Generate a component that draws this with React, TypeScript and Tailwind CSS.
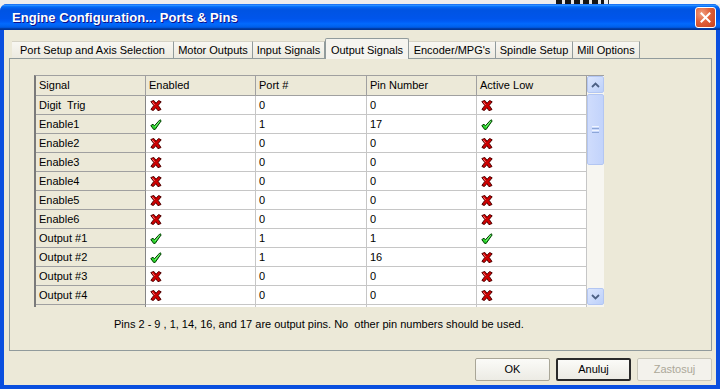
import React from "react";

function XIcon() {
  return (
    <svg width="12" height="11" viewBox="0 0 12 11">
      <path
        d="M0.8 1.6 L3.8 0.4 L6 3.3 L8.6 0.5 L11.2 1.8 L8.2 5.4 L11 9.5 L8 10.7 L5.8 7.7 L3.3 10.6 L0.9 9.4 L3.8 5.4 Z"
        fill="#CF0000"
        stroke="#500000"
        strokeWidth="1"
        strokeLinejoin="round"
      />
      <path d="M2.2 1.8 L4.6 4.9" stroke="#FF6E6E" strokeWidth="1" />
    </svg>
  );
}

function CheckIcon() {
  return (
    <svg width="12" height="11" viewBox="0 0 12 11">
      <path
        d="M0.8 6.6 L3 5.2 L4.4 6.8 L10 0.7 L11.2 1.8 L5.2 10.4 L3.6 10.4 Z"
        fill="#2CD42C"
        stroke="#003E00"
        strokeWidth="1"
        strokeLinejoin="round"
      />
      <path d="M5 8 L9.6 2.2" stroke="#9CFF9C" strokeWidth="0.8" />
    </svg>
  );
}

type Row = [string, boolean, string, string, boolean];

const rows: Row[] = [
  ["Digit  Trig", false, "0", "0", false],
  ["Enable1", true, "1", "17", true],
  ["Enable2", false, "0", "0", false],
  ["Enable3", false, "0", "0", false],
  ["Enable4", false, "0", "0", false],
  ["Enable5", false, "0", "0", false],
  ["Enable6", false, "0", "0", false],
  ["Output #1", true, "1", "1", true],
  ["Output #2", true, "1", "16", false],
  ["Output #3", false, "0", "0", false],
  ["Output #4", false, "0", "0", false],
];

const tabs: { label: string; w: string; sel?: boolean }[] = [
  { label: "Port Setup and Axis Selection", w: "w-[162px]" },
  { label: "Motor Outputs", w: "w-[79px]" },
  { label: "Input Signals", w: "w-[72px]" },
  { label: "Output Signals", w: "w-[84px]", sel: true },
  { label: "Encoder/MPG's", w: "w-[87px]" },
  { label: "Spindle Setup", w: "w-[77px]" },
  { label: "Mill Options", w: "w-[67px]" },
];

function ScrollBtn({ up }: { up: boolean }) {
  return (
    <div className="h-[17px] w-[17px] rounded-[2px] border border-[#B3C6F2] bg-[linear-gradient(135deg,#DCE6FD,#BCD0FA)] flex items-center justify-center">
      <svg width="9" height="6" viewBox="0 0 9 6">
        <path
          d={up ? "M1 5 L4.5 1.5 L8 5" : "M1 1 L4.5 4.5 L8 1"}
          fill="none"
          stroke="#4D6185"
          strokeWidth="1.8"
        />
      </svg>
    </div>
  );
}

export default function App() {
  return (
    <div className="w-[720px] h-[389px] flex flex-col overflow-hidden bg-[#ebebeb] font-['Liberation_Sans',Arial,sans-serif] text-[11px] text-black">
      {/* desktop strip */}
      <div className="h-[4px] flex shrink-0">
        <div className="w-[556px] bg-[#ececec]" />
        <div className="w-[48px] bg-[repeating-linear-gradient(90deg,#151515_0px,#151515_6px,#e6e6e6_6px,#e6e6e6_9px)]" />
        <div className="w-[4px] bg-[#eeeeee]" />
        <div className="w-[1px] bg-[#333333]" />
        <div className="flex-1 bg-[#f8f8f8]" />
      </div>

      {/* window */}
      <div className="flex-1 flex flex-col rounded-t-[7px] overflow-hidden bg-[#0A4FDF]">
        {/* title bar */}
        <div className="h-[26px] shrink-0 flex items-center justify-between pl-[12px] pr-[4px] bg-[linear-gradient(to_bottom,#0058ee_0%,#3593ff_4%,#288eff_6%,#127dff_8%,#036ffc_10%,#0262ee_14%,#0057e5_20%,#0054e3_24%,#0055eb_56%,#005bf5_66%,#026afe_76%,#0062ef_86%,#0052d6_92%,#0040ab_94%,#003092_100%)]">
          <span className="text-white font-bold text-[13px] tracking-[0.05px] [text-shadow:1px_1px_#0F1089] pt-[1px]">
            Engine Configuration... Ports &amp; Pins
          </span>
          <div className="w-[21px] h-[21px] rounded-[3px] border border-white bg-[radial-gradient(circle_at_30%_30%,#F0A080_0%,#E0603A_45%,#C8401C_100%)] flex items-center justify-center">
            <svg width="11" height="11" viewBox="0 0 11 11">
              <path d="M1.5 1.5 L9.5 9.5 M9.5 1.5 L1.5 9.5" stroke="white" strokeWidth="2" strokeLinecap="square" />
            </svg>
          </div>
        </div>

        {/* body */}
        <div className="flex-1 flex flex-col mx-[4px] mb-[4px] bg-[#ECE9D8]">
          {/* tabs */}
          <div className="mt-[8px] h-[20px] flex items-end pl-[8px] relative z-10">
            {tabs.map((t) =>
              t.sel ? (
                <div
                  key={t.label}
                  className={`${t.w} h-[21px] -mb-[1px] flex items-start justify-center pt-[3px] bg-[#F5F4EF] border-t border-l border-r border-[#919B9C] rounded-t-[2px]`}
                >
                  {t.label}
                </div>
              ) : (
                <div
                  key={t.label}
                  className={`${t.w} h-[17px] flex items-center justify-center bg-[linear-gradient(to_bottom,#F8F7F2,#ECEAE0)] border-r border-[#919B9C] border-t border-t-[#D6D3C6]`}
                >
                  {t.label}
                </div>
              )
            )}
          </div>

          {/* panel */}
          <div className="ml-[5px] mr-[4px] h-[293px] border border-[#919B9C] bg-[#ECE9D8] flex flex-col">
            <div className="pt-[16px] pl-[24px]">
              <div className="w-[570px] h-[232px] flex border-t border-t-[#A0A0A0] border-l-2 border-l-[#7A7A7A] overflow-hidden">
                <div className="flex flex-col w-[551px] h-[231px] overflow-hidden">
                  {/* header */}
                  <div className="flex h-[20px] shrink-0">
                    <div className="w-[110px] border-r border-b border-[#A0A0A0] flex items-center pl-[3px]">Signal</div>
                    <div className="w-[110px] border-r border-b border-[#A0A0A0] flex items-center pl-[3px]">Enabled</div>
                    <div className="w-[111px] border-r border-b border-[#A0A0A0] flex items-center pl-[3px]">Port #</div>
                    <div className="w-[110px] border-r border-b border-[#A0A0A0] flex items-center pl-[3px]">Pin Number</div>
                    <div className="w-[110px] border-r border-b border-[#A0A0A0] flex items-center pl-[3px]">Active Low</div>
                  </div>
                  {rows.map((r, i) => (
                    <div key={i} className="flex h-[19px] shrink-0">
                      <div className="w-[110px] border-r border-r-[#858585] border-b border-b-[#A0A0A0] flex items-center pl-[3px] whitespace-pre">
                        {r[0]}
                      </div>
                      <div className="w-[110px] bg-white border-r border-b border-[#C6C6C6] flex items-center pl-[4px]">
                        {r[1] ? <CheckIcon /> : <XIcon />}
                      </div>
                      <div className="w-[111px] bg-white border-r border-b border-[#C6C6C6] flex items-center pl-[3px]">
                        {r[2]}
                      </div>
                      <div className="w-[110px] bg-white border-r border-b border-[#C6C6C6] flex items-center pl-[3px]">
                        {r[3]}
                      </div>
                      <div className="w-[110px] bg-white border-r border-b border-[#C6C6C6] flex items-center pl-[4px]">
                        {r[4] ? <CheckIcon /> : <XIcon />}
                      </div>
                    </div>
                  ))}
                  {/* partially visible next row */}
                  <div className="flex h-[19px] shrink-0">
                    <div className="w-[110px] border-r border-r-[#858585]" />
                    <div className="w-[110px] bg-white border-r border-[#C6C6C6] flex items-start pl-[4px] pt-[2px]">
                      <XIcon />
                    </div>
                    <div className="w-[111px] bg-white border-r border-[#C6C6C6]" />
                    <div className="w-[110px] bg-white border-r border-[#C6C6C6]" />
                    <div className="w-[110px] bg-white border-r border-[#C6C6C6] flex items-start pl-[4px] pt-[2px]">
                      <XIcon />
                    </div>
                  </div>
                </div>
                {/* scrollbar */}
                <div className="w-[17px] h-[231px] flex flex-col bg-[#F7F6F1]">
                  <ScrollBtn up />
                  <div className="h-[71px] mt-[1px] rounded-[2px] border border-[#B3C6F2] bg-[linear-gradient(90deg,#CFDCFC,#C2D3FB)] flex flex-col items-center justify-center gap-[1px]">
                    <div className="w-[7px] h-[1px] bg-[#EEF4FE]" />
                    <div className="w-[7px] h-[1px] bg-[#8CA6D8]" />
                    <div className="w-[7px] h-[1px] bg-[#EEF4FE]" />
                    <div className="w-[7px] h-[1px] bg-[#8CA6D8]" />
                  </div>
                  <div className="flex-1" />
                  <ScrollBtn up={false} />
                  <div className="h-[2px]" />
                </div>
              </div>
            </div>
            <div className="mt-[11px] pl-[104px] leading-[13px] whitespace-pre">
              Pins 2 - 9 , 1, 14, 16, and 17 are output pins. No  other pin numbers should be used.
            </div>
          </div>

          {/* buttons */}
          <div className="mt-[7px] flex justify-end gap-[6px] pr-[4px]">
            <div className="w-[75px] h-[23px] rounded-[2px] border border-[#A9A697] bg-[linear-gradient(to_bottom,#FBFBF8,#ECEBE4)] flex items-center justify-center">
              OK
            </div>
            <div className="w-[75px] h-[23px] rounded-[2px] border-2 border-[#2A2A2A] bg-[linear-gradient(to_bottom,#FBFBF8,#ECEBE4)] flex items-center justify-center">
              Anuluj
            </div>
            <div className="w-[75px] h-[23px] rounded-[2px] border border-[#C9C7BA] bg-[#F3F2EC] text-[#ACA899] flex items-center justify-center">
              Zastosuj
            </div>
          </div>
        </div>
      </div>
    </div>
  );
}
